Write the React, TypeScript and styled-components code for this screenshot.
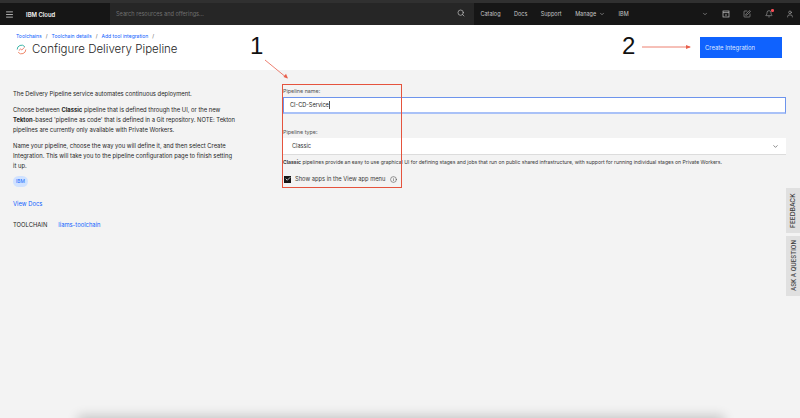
import { Bell, Check, ChevronDown, Info, Menu, Search, SquarePen, User } from 'lucide-react';
import styled, { createGlobalStyle } from 'styled-components';

const GlobalStyle = createGlobalStyle`
  html, body {
    margin: 0;
    height: 100%;
    overflow: hidden;
    background: #f3f3f3;
    font-family: 'Inter', 'Noto Sans', 'Liberation Sans', sans-serif;
    color: #161616;
  }
`;

const Page = styled.div`
  position: relative;
  display: flex;
  flex-direction: column;
  width: 800px;
  height: 418px;
  overflow: hidden;
`;

const TopStrip = styled.div`
  height: 3px;
  background: #303030;
`;

const Header = styled.header`
  display: flex;
  align-items: center;
  height: 22px;
  background: #161616;
  color: #c6c6c6;
  font-size: 5.5px;
`;

const MenuButton = styled.div`
  display: flex;
  align-items: center;
  width: 26px;
  padding-left: 5px;
  box-sizing: border-box;
  color: #e0e0e0;
`;

const Brand = styled.div`
  width: 84px;
  color: #f4f4f4;
  font-size: 5.9px;
  font-weight: 600;
`;

const SearchBox = styled.div`
  display: flex;
  align-items: center;
  justify-content: space-between;
  width: 364px;
  height: 100%;
  padding: 0 9px 0 6px;
  box-sizing: border-box;
  background: #262626;
  color: #6f6f6f;
  font-size: 5.6px;
`;

const SearchIcon = styled(Search)`
  color: #c6c6c6;
  margin-top: -2px;
`;

const Nav = styled.nav`
  display: flex;
  align-items: center;
  gap: 13.5px;
  margin-left: 6.5px;
`;

const NavItem = styled.span`
  display: flex;
  align-items: center;
  gap: 3px;
`;

const Tools = styled.div`
  display: flex;
  align-items: center;
  gap: 13.5px;
  margin-left: auto;
  padding-right: 6px;
  color: #c6c6c6;
`;

const BellWrap = styled.span`
  position: relative;
  display: flex;
`;

const RedDot = styled.span`
  position: absolute;
  top: -1px;
  right: -1px;
  width: 2.5px;
  height: 2.5px;
  border-radius: 50%;
  background: #fa4d56;
`;

const TitleBar = styled.div`
  display: flex;
  justify-content: space-between;
  height: 45px;
  padding: 7px 18px 0 16px;
  box-sizing: border-box;
  background: #ffffff;
`;

const Crumbs = styled.div`
  display: flex;
  gap: 4px;
  margin-top: 1px;
  font-size: 5.05px;
  line-height: 7px;
  color: #0f62fe;
`;

const Slash = styled.span`
  color: #525252;
`;

const TitleRow = styled.div`
  display: flex;
  align-items: center;
  gap: 5px;
  margin-top: 1px;
`;

const Title = styled.h1`
  margin: 0;
  font-size: 11.5px;
  line-height: 16px;
  font-weight: 300;
  color: #262626;
`;

const PrimaryButton = styled.div`
  display: flex;
  align-items: center;
  width: 82px;
  height: 21px;
  margin-top: 5px;
  padding-left: 5px;
  box-sizing: border-box;
  background: #0f62fe;
  color: #dfe8ff;
  font-size: 5.9px;
`;

const Content = styled.main`
  display: flex;
  flex: 1;
  padding-left: 13px;
`;

const Sidebar = styled.section`
  width: 270px;
  padding-top: 19px;
  box-sizing: border-box;
  font-size: 5.85px;
  line-height: 10px;
  color: #262626;
`;

const Paragraph = styled.p`
  margin: 0 0 6px;
  width: 226px;
`;

const Tag = styled.span`
  display: block;
  width: fit-content;
  margin-top: -1px;
  padding: 0 3px;
  height: 11px;
  line-height: 11px;
  border-radius: 6px;
  background: #d0e2ff;
  color: #0f62fe;
  font-size: 4.8px;
`;

const DocsLink = styled.a`
  display: block;
  margin-top: 12px;
  color: #0f62fe;
`;

const ToolchainRow = styled.div`
  display: flex;
  gap: 11px;
  margin-top: 11px;
`;

const ToolchainLink = styled.a`
  color: #0f62fe;
`;

const Form = styled.section`
  width: 503px;
  padding-top: 17px;
`;

const FieldLabel = styled.label`
  display: block;
  font-size: 5.4px;
  line-height: 8px;
  color: #525252;
`;

const NameInput = styled.div`
  display: flex;
  align-items: center;
  height: 17px;
  margin-top: 2px;
  padding-left: 6px;
  box-sizing: border-box;
  background: #ffffff;
  border: 1px solid #6d94ec;
  border-bottom: 2px solid #a9c1f7;
  font-size: 5.6px;
  color: #262626;
`;

const Caret = styled.span`
  width: 0.5px;
  height: 8px;
  background: #525252;
`;

const TypeField = styled.div`
  margin-top: 14px;
`;

const SelectBox = styled.div`
  display: flex;
  align-items: center;
  justify-content: space-between;
  height: 17px;
  margin-top: 2px;
  padding: 0 7px 0 9px;
  box-sizing: border-box;
  background: #ffffff;
  border-bottom: 1px solid #dcdcdc;
  font-size: 5.6px;
  color: #393939;
`;

const Hint = styled.p`
  margin: 4px 0 0;
  font-size: 5.06px;
  line-height: 7px;
  color: #393939;
`;

const CheckRow = styled.div`
  display: flex;
  align-items: center;
  gap: 4px;
  margin-top: 9px;
  padding-left: 1px;
  font-size: 5.75px;
  line-height: 8px;
  color: #393939;
`;

const CheckBox = styled.span`
  display: flex;
  align-items: center;
  justify-content: center;
  width: 7px;
  height: 7px;
  background: #161616;
  color: #ffffff;
`;

const InfoIcon = styled(Info)`
  margin-left: 1px;
  color: #525252;
`;

const SideTab = styled.div<{ $top: number; $height: number; $size: number }>`
  position: absolute;
  right: 0;
  top: ${(props) => props.$top}px;
  display: flex;
  align-items: center;
  justify-content: center;
  width: 14px;
  height: ${(props) => props.$height}px;
  background: #e0e0e0;
  color: #393939;
  font-size: ${(props) => props.$size}px;
  font-weight: 500;
  writing-mode: vertical-rl;
  transform: rotate(180deg);
`;

const BottomShadow = styled.div`
  position: absolute;
  left: 80px;
  bottom: -12px;
  width: 642px;
  height: 12px;
  box-shadow: 0 0 12px 2px rgba(0, 0, 0, 0.2);
`;

const Highlight = styled.div`
  position: absolute;
  left: 282px;
  top: 84px;
  width: 118px;
  height: 102px;
  border: 1px solid #e5533d;
  pointer-events: none;
`;

const Callout = styled.span<{ $left: number; $top: number }>`
  position: absolute;
  left: ${(props) => props.$left}px;
  top: ${(props) => props.$top}px;
  font-family: 'Liberation Sans', sans-serif;
  font-size: 24px;
  line-height: 24px;
  color: #111111;
`;

const ArrowLayer = styled.svg`
  position: absolute;
  left: 0;
  top: 0;
  pointer-events: none;
`;

const PipelineIcon = () => (
  <svg width="11" height="11" viewBox="0 0 11 11" fill="none">
    <path d="M1.2 5.5a4.3 4.3 0 0 1 7.6-2.8" stroke="#3fb6a8" strokeWidth="1" />
    <path d="M9.8 5.5a4.3 4.3 0 0 1-7.6 2.8" stroke="#f08a6c" strokeWidth="1" />
    <path d="M2.8 6.6 4.6 5l1.2 1L8.6 3.2" stroke="#e8604c" strokeWidth="0.8" />
  </svg>
);

const CalendarIcon = () => (
  <svg width="8" height="8" viewBox="0 0 8 8" fill="none" stroke="currentColor" strokeWidth="0.7">
    <rect x="1" y="1" width="6" height="6" />
    <path d="M1 2.6h6M4 4v2" />
  </svg>
);

export default function App() {
  return (
    <Page>
      <GlobalStyle />
      <TopStrip />
      <Header>
        <MenuButton>
          <Menu size={9} />
        </MenuButton>
        <Brand>IBM Cloud</Brand>
        <SearchBox>
          <span>Search resources and offerings...</span>
          <SearchIcon size={8} />
        </SearchBox>
        <Nav>
          <NavItem>Catalog</NavItem>
          <NavItem>Docs</NavItem>
          <NavItem>Support</NavItem>
          <NavItem>
            Manage <ChevronDown size={6} />
          </NavItem>
          <NavItem>IBM</NavItem>
        </Nav>
        <Tools>
          <ChevronDown size={6} />
          <CalendarIcon />
          <SquarePen size={8} strokeWidth={1.5} />
          <BellWrap>
            <Bell size={8} strokeWidth={1.5} />
            <RedDot />
          </BellWrap>
          <User size={8} strokeWidth={1.5} />
        </Tools>
      </Header>
      <TitleBar>
        <div>
          <Crumbs>
            <span>Toolchains</span>
            <Slash>/</Slash>
            <span>Toolchain details</span>
            <Slash>/</Slash>
            <span>Add tool integration</span>
            <Slash>/</Slash>
          </Crumbs>
          <TitleRow>
            <PipelineIcon />
            <Title>Configure Delivery Pipeline</Title>
          </TitleRow>
        </div>
        <PrimaryButton>Create Integration</PrimaryButton>
      </TitleBar>
      <Content>
        <Sidebar>
          <Paragraph>The Delivery Pipeline service automates continuous deployment.</Paragraph>
          <Paragraph>
            Choose between <b>Classic</b> pipeline that is defined through the UI, or the new{' '}
            <b>Tekton</b>-based 'pipeline as code' that is defined in a Git repository. NOTE: Tekton
            pipelines are currently only available with Private Workers.
          </Paragraph>
          <Paragraph>
            Name your pipeline, choose the way you will define it, and then select Create
            Integration. This will take you to the pipeline configuration page to finish setting
            <br />
            it up.
          </Paragraph>
          <Tag>IBM</Tag>
          <DocsLink>View Docs</DocsLink>
          <ToolchainRow>
            <span>TOOLCHAIN</span>
            <ToolchainLink>liams-toolchain</ToolchainLink>
          </ToolchainRow>
        </Sidebar>
        <Form>
          <FieldLabel>Pipeline name:</FieldLabel>
          <NameInput>
            CI-CD-Service
            <Caret />
          </NameInput>
          <TypeField>
            <FieldLabel>Pipeline type:</FieldLabel>
            <SelectBox>
              Classic
              <ChevronDown size={7} />
            </SelectBox>
          </TypeField>
          <Hint>
            <b>Classic</b> pipelines provide an easy to use graphical UI for defining stages and jobs
            that run on public shared infrastructure, with support for running individual stages on
            Private Workers.
          </Hint>
          <CheckRow>
            <CheckBox>
              <Check size={6} strokeWidth={3} />
            </CheckBox>
            Show apps in the View app menu
            <InfoIcon size={7} />
          </CheckRow>
        </Form>
      </Content>
      <SideTab $top={188} $height={45} $size={6.6}>FEEDBACK</SideTab>
      <SideTab $top={236} $height={60} $size={6}>ASK A QUESTION</SideTab>
      <BottomShadow />
      <Highlight />
      <Callout $left={250} $top={34}>1</Callout>
      <Callout $left={622} $top={34}>2</Callout>
      <ArrowLayer width="800" height="418" viewBox="0 0 800 418" fill="none">
        <path d="M265 60 287 78" stroke="#e8604c" strokeWidth="0.8" />
        <path d="M288 78.5 283.5 77 286 73.8Z" fill="#e8604c" />
        <path d="M642 47H690" stroke="#e8604c" strokeWidth="0.8" />
        <path d="M691 47 686 45V49Z" fill="#e8604c" />
      </ArrowLayer>
    </Page>
  );
}
